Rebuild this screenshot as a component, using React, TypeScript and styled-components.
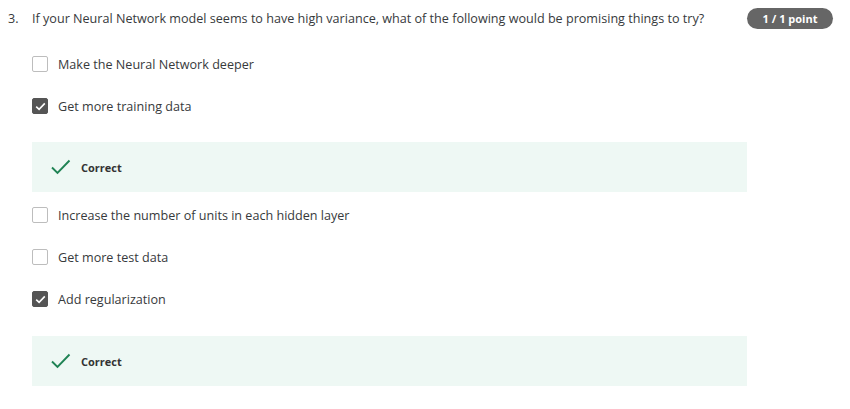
import React from "react";
import styled, { createGlobalStyle } from "styled-components";

const Global = createGlobalStyle`
  html, body { margin: 0; padding: 0; background: #fff; }
  body { font-family: "Open Sans", "Noto Sans", sans-serif; color: #373a3c; }
`;

const Page = styled.div`
  padding: 8px 17px 0 8px;
  width: 850px;
  box-sizing: border-box;
`;

const Header = styled.div`
  display: flex;
  align-items: center;
  height: 21px;
`;

const Num = styled.span`
  width: 24px;
  font-size: 12.6px;
  flex: none;
`;

const Question = styled.div`
  flex: 1;
  font-size: 12.6px;
`;

const Badge = styled.span`
  flex: none;
  width: 86px;
  height: 21px;
  border-radius: 11px;
  background: #666;
  color: #fff;
  font-size: 11px;
  font-weight: 700;
  display: flex;
  align-items: center;
  justify-content: center;
`;

const List = styled.div`
  display: flex;
  flex-direction: column;
  padding-left: 24px;
  margin-top: 14px;
  width: 715px;
`;

const Row = styled.label`
  display: flex;
  align-items: center;
  height: 42px;
  font-size: 12.6px;
  color: #373a3c;
`;

const Box = styled.span<{ $checked?: boolean }>`
  width: 16px;
  height: 16px;
  box-sizing: border-box;
  border-radius: 2px;
  flex: none;
  margin-right: 10px;
  border: 1px solid ${(p) => (p.$checked ? "#555" : "#bdbdbd")};
  background: ${(p) => (p.$checked ? "#555" : "#fff")};
  display: flex;
  align-items: center;
  justify-content: center;
`;

const Feedback = styled.div<{ $top: number }>`
  margin-top: ${(p) => p.$top}px;
  margin-bottom: 2px;
  height: 50px;
  background: #eef8f4;
  display: flex;
  align-items: center;
  padding-left: 19px;
  font-size: 11px;
  font-weight: 700;
  color: #333;
`;

const Tick = styled.svg`
  margin-right: 10px;
`;

const Check = () => (
  <svg width="13" height="13" viewBox="0 0 13 13">
    <path d="M2.2 6.6 L5.1 9.4 L10.8 3.4" fill="none" stroke="#fff" strokeWidth="1.6" />
  </svg>
);

const Option = ({ label, checked }: { label: string; checked?: boolean }) => (
  <Row>
    <Box $checked={checked}>{checked && <Check />}</Box>
    {label}
  </Row>
);

const Correct = ({ top }: { top: number }) => (
  <Feedback $top={top}>
    <Tick width="20" height="16" viewBox="0 0 20 16">
      <path d="M1 8.5 L6.5 14 L18.5 1.5" fill="none" stroke="#1f8354" strokeWidth="1.9" />
    </Tick>
    Correct
  </Feedback>
);

export default function App() {
  return (
    <Page>
      <Global />
      <Header>
        <Num>3.</Num>
        <Question>
          If your Neural Network model seems to have high variance, what of the following would be promising things to try?
        </Question>
        <Badge>1 / 1 point</Badge>
      </Header>
      <List>
        <Option label="Make the Neural Network deeper" />
        <Option label="Get more training data" checked />
        <Correct top={15} />
        <Option label="Increase the number of units in each hidden layer" />
        <Option label="Get more test data" />
        <Option label="Add regularization" checked />
        <Correct top={16} />
      </List>
    </Page>
  );
}
